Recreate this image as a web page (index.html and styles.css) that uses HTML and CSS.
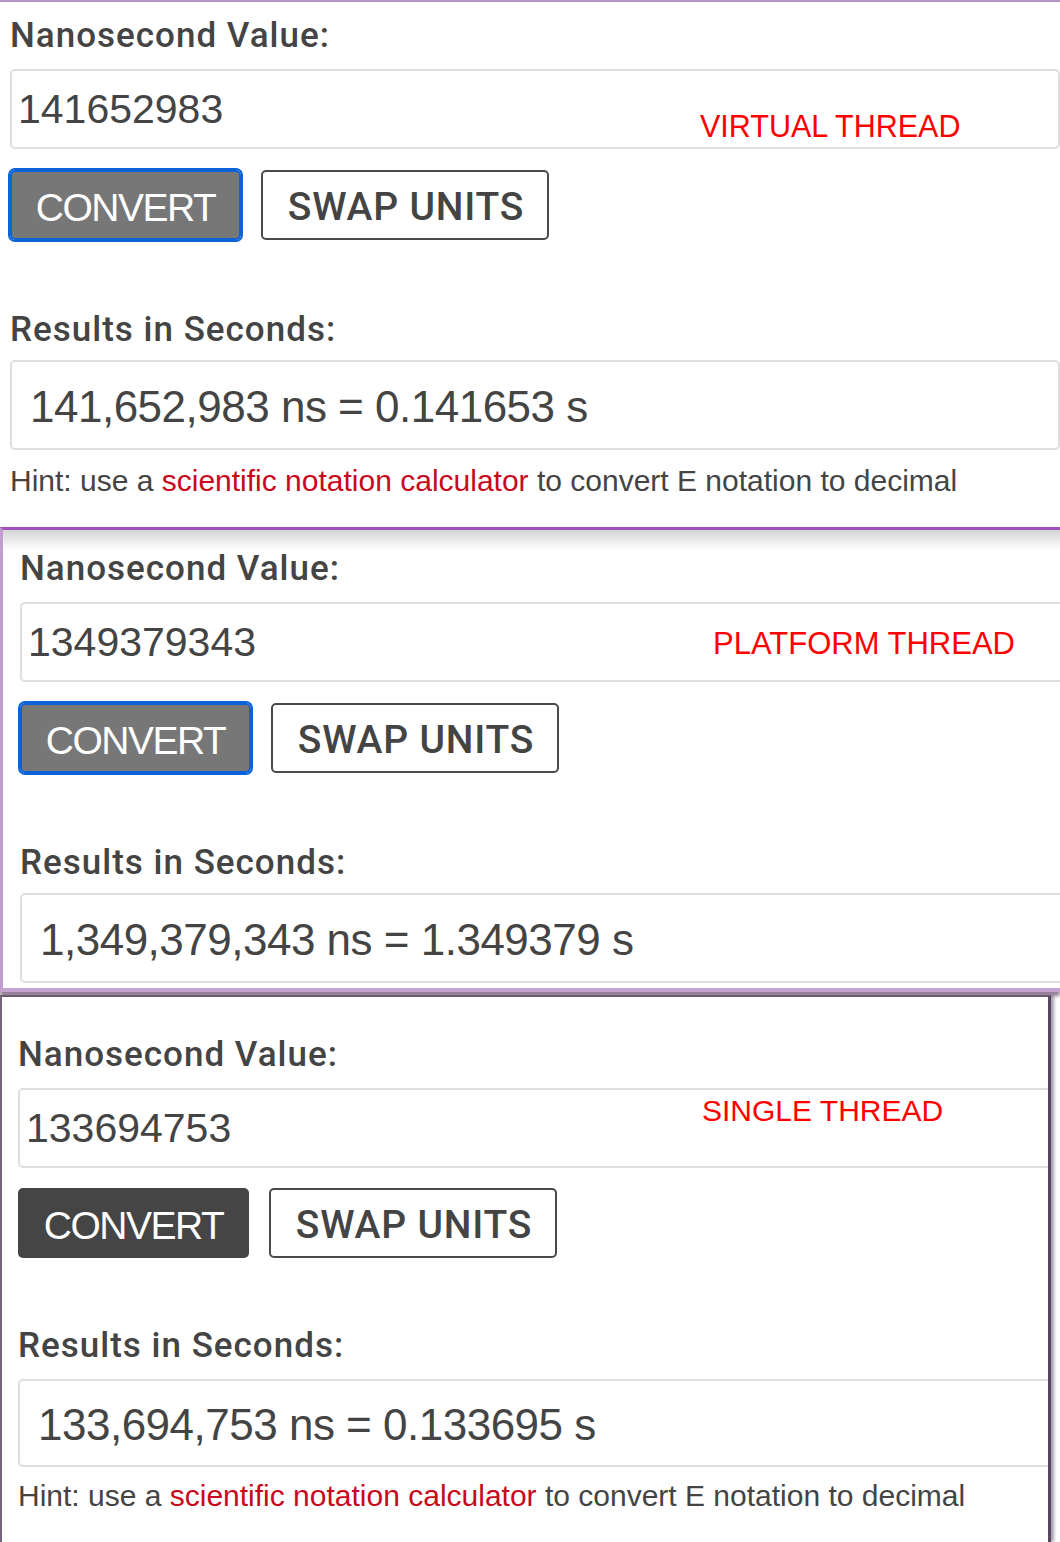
FILE: index.html
```html
<!DOCTYPE html>
<html lang="en">
<head>
<meta charset="utf-8">
<title>Nanosecond to Seconds – thread comparison</title>
<link rel="stylesheet" href="styles.css">
</head>
<body>
  <section class="shot shot-virtual">
    <div class="converter">
      <div class="label">Nanosecond Value:</div>
      <div class="field">
        <span class="field-value">141652983</span>
        <span class="tag tag-virtual">VIRTUAL THREAD</span>
      </div>
      <div class="actions">
        <button class="btn btn-convert is-focused">CONVERT</button>
        <button class="btn btn-swap">SWAP UNITS</button>
      </div>
      <div class="label label-results">Results in Seconds:</div>
      <div class="result">141,652,983 ns = 0.141653 s</div>
      <p class="hint">Hint: use a <a href="#">scientific notation calculator</a> to convert E notation to decimal</p>
    </div>
  </section>

  <section class="shot shot-platform">
    <div class="converter">
      <div class="label">Nanosecond Value:</div>
      <div class="field">
        <span class="field-value">1349379343</span>
        <span class="tag tag-platform">PLATFORM THREAD</span>
      </div>
      <div class="actions">
        <button class="btn btn-convert is-focused">CONVERT</button>
        <button class="btn btn-swap">SWAP UNITS</button>
      </div>
      <div class="label label-results">Results in Seconds:</div>
      <div class="result">1,349,379,343 ns = 1.349379 s</div>
    </div>
  </section>

  <section class="shot shot-single">
    <div class="converter converter-compact">
      <div class="label">Nanosecond Value:</div>
      <div class="field">
        <span class="field-value">133694753</span>
        <span class="tag tag-single">SINGLE THREAD</span>
      </div>
      <div class="actions">
        <button class="btn btn-convert is-dark">CONVERT</button>
        <button class="btn btn-swap">SWAP UNITS</button>
      </div>
      <div class="label label-results">Results in Seconds:</div>
      <div class="result">133,694,753 ns = 0.133695 s</div>
      <p class="hint">Hint: use a <a href="#">scientific notation calculator</a> to convert E notation to decimal</p>
    </div>
  </section>
</body>
</html>
```

FILE: styles.css
```css
* {
  box-sizing: border-box;
}

html,
body {
  margin: 0;
  padding: 0;
  overflow: hidden;
}

body {
  width: 1060px;
  height: 1542px;
  background: #ffffff;
  font-family: "Liberation Sans", Arial, sans-serif;
  color: #444444;
}

/* ---------- screenshot panels ---------- */
.shot {
  position: relative;
  overflow: hidden;
  background: #ffffff;
}

.shot-virtual {
  height: 527px;
  border-top: 2px solid #b894c6;
  padding: 14px 0 0 10px;
}

.shot-platform {
  height: 465px;
  border-top: 3px solid #a052bb;
  border-left: 3px solid #c39dd1;
  border-bottom: 4px solid #c6a4d2;
  padding: 19px 0 0 17px;
  background: linear-gradient(#d4d4d4, #ffffff 20px);
  box-shadow: 0 4px 3px rgba(80, 50, 90, 0.6);
}

.shot-single {
  width: 1051px;
  height: 547px;
  margin-top: 3px;
  border-top: 2px solid #6b5a70;
  border-left: 2px solid #76647c;
  border-right: 3px solid #5a4663;
  padding: 38px 0 0 16px;
  box-shadow: 3px 0 3px rgba(60, 40, 70, 0.45);
}

/* ---------- converter widget ---------- */
.converter {
  width: 1050px;
}

.label {
  font-family: Roboto, "Liberation Sans", Arial, sans-serif;
  font-size: 35px;
  font-weight: 500;
  letter-spacing: 1px;
  line-height: 40px;
}

.field {
  position: relative;
  display: flex;
  align-items: center;
  height: 80px;
  margin-top: 13px;
  padding-left: 6px;
  border: 2px solid #dedede;
  border-radius: 5px;
  font-size: 41px;
}

.tag {
  position: absolute;
  color: #ff0000;
  font-size: 30.5px;
  line-height: 30px;
  white-space: nowrap;
}

.tag-virtual {
  left: 688px;
  top: 40px;
}

.tag-platform {
  left: 691px;
  top: 24px;
  font-size: 31px;
  line-height: 32px;
}

.tag-single {
  left: 682px;
  top: 6px;
  font-size: 30px;
}

.actions {
  display: flex;
  gap: 20px;
  margin-top: 21px;
}

.btn {
  display: flex;
  align-items: center;
  justify-content: center;
  height: 70px;
  padding: 4px 0 0;
  border-radius: 5px;
  font-family: inherit;
  font-size: 39px;
  line-height: 1;
  cursor: pointer;
}

.btn-convert {
  width: 231px;
  border: 0;
  background: #777777;
  color: #ffffff;
  letter-spacing: -1.5px;
}

.btn-convert.is-focused {
  border: 2px solid #0c63d8;
  outline: 2px solid #0c63d8;
  outline-offset: 0;
}

.btn-convert.is-dark {
  background: #454545;
}

.btn-swap {
  width: 288px;
  padding-left: 2px;
  border: 2px solid #4a4a4a;
  background: #ffffff;
  color: #444444;
  font-family: Roboto, "Liberation Sans", Arial, sans-serif;
  font-weight: 500;
  letter-spacing: 0.8px;
}

.label-results {
  margin-top: 70px;
}

.result {
  display: flex;
  align-items: center;
  height: 90px;
  margin-top: 10px;
  padding: 4px 0 0 18px;
  border: 2px solid #dedede;
  border-radius: 5px;
  font-size: 44px;
  letter-spacing: -0.5px;
  white-space: nowrap;
}

.hint {
  margin: 13px 0 0;
  font-size: 30px;
  line-height: 36px;
  white-space: nowrap;
}

.hint a {
  color: #c8081c;
  text-decoration: none;
}

/* third capture is a hair tighter */
.converter-compact .actions {
  margin-top: 20px;
}

.converter-compact .label-results {
  margin-top: 68px;
}

.converter-compact .result {
  height: 88px;
  margin-top: 13px;
}

.converter-compact .hint {
  margin-top: 11px;
}
```
